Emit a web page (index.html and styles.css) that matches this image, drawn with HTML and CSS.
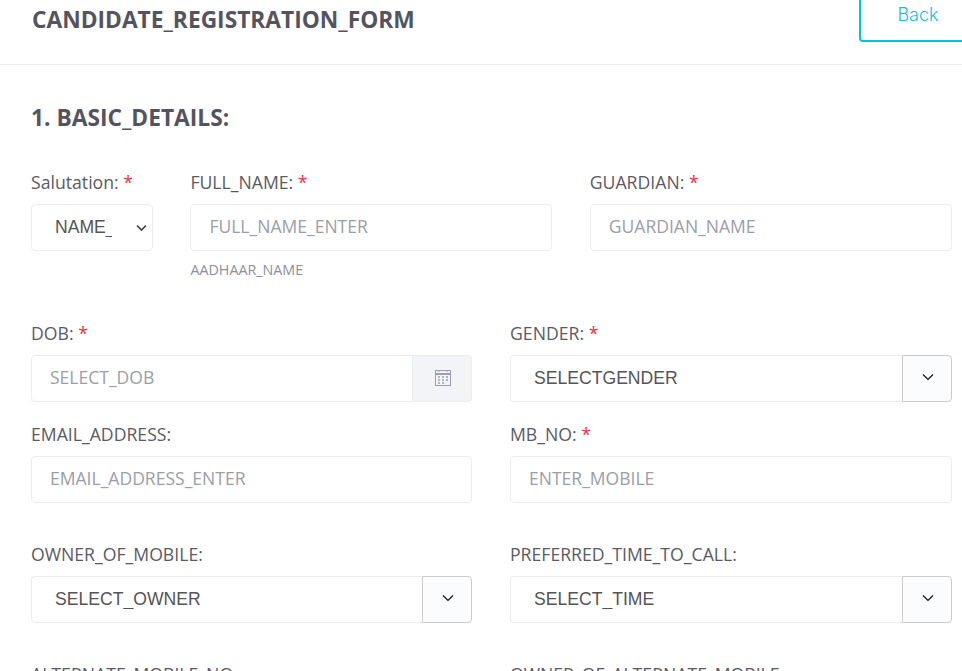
FILE: index.html
```html
<!DOCTYPE html>
<html lang="en">
<head>
    <meta charset="UTF-8">
    <meta name="viewport" content="width=device-width, initial-scale=1.0">
    <title>Candidate Registration Form</title>
    <link rel="stylesheet" href="styles.css">
</head>
<body>

    <!-- Page header -->
    <div class="header">
        <h1>CANDIDATE_REGISTRATION_FORM</h1>
        <button class="back-btn">Back</button>
    </div>

    <!-- Form -->
    <form class="form">
        <h2>1. BASIC_DETAILS:</h2>

        <div class="row row-names">
            <div class="field">
                <label for="salutation">Salutation: <span class="req">*</span></label>
                <div class="salutation-wrap">
                    <select id="salutation" class="salutation">
                        <option>NAME_</option>
                    </select>
                    <svg class="salutation-arrow" width="11" height="8" viewBox="0 0 11 8" fill="none"><path d="M1 1.5l4.5 4.5 4.5-4.5" stroke="#444" stroke-width="1.7"/></svg>
                </div>
            </div>
            <div class="field">
                <label for="fullName">FULL_NAME: <span class="req">*</span></label>
                <input type="text" id="fullName" placeholder="FULL_NAME_ENTER">
                <small>AADHAAR_NAME</small>
            </div>
            <div class="field">
                <label for="guardian">GUARDIAN: <span class="req">*</span></label>
                <input type="text" id="guardian" placeholder="GUARDIAN_NAME">
            </div>
        </div>

        <div class="row row-tight">
            <div class="field">
                <label for="dob">DOB: <span class="req">*</span></label>
                <div class="group">
                    <input type="text" id="dob" placeholder="SELECT_DOB">
                    <span class="addon-date">
                        <svg width="18" height="18" viewBox="0 0 18 18" fill="none">
                            <rect x="1.5" y="1.5" width="15" height="15" stroke="#9a9eb0"/>
                            <path d="M2 5h14" stroke="#9a9eb0" stroke-width="2"/>
                            <path d="M5 1v2M13 1v2" stroke="#9a9eb0"/>
                            <path d="M4 8h2M8 8h2M12 8h2M4 11h2M8 11h2M12 11h2M4 14h2M8 14h2" stroke="#9a9eb0" stroke-width="1.4"/>
                        </svg>
                    </span>
                </div>
            </div>
            <div class="field">
                <label for="gender">GENDER: <span class="req">*</span></label>
                <div class="group">
                    <select id="gender" class="plain-select"><option>SELECTGENDER</option></select>
                    <span class="addon-arrow">
                        <svg width="12" height="8" viewBox="0 0 12 8" fill="none"><path d="M1 1.5l5 5 5-5" stroke="#111" stroke-width="1.2"/></svg>
                    </span>
                </div>
            </div>
        </div>

        <div class="row">
            <div class="field">
                <label for="email">EMAIL_ADDRESS:</label>
                <input type="text" id="email" placeholder="EMAIL_ADDRESS_ENTER">
            </div>
            <div class="field">
                <label for="mobile">MB_NO: <span class="req">*</span></label>
                <input type="text" id="mobile" placeholder="ENTER_MOBILE">
            </div>
        </div>

        <div class="row">
            <div class="field">
                <label for="owner">OWNER_OF_MOBILE:</label>
                <div class="group">
                    <select id="owner" class="plain-select"><option>SELECT_OWNER</option></select>
                    <span class="addon-arrow">
                        <svg width="12" height="8" viewBox="0 0 12 8" fill="none"><path d="M1 1.5l5 5 5-5" stroke="#111" stroke-width="1.2"/></svg>
                    </span>
                </div>
            </div>
            <div class="field">
                <label for="callTime">PREFERRED_TIME_TO_CALL:</label>
                <div class="group">
                    <select id="callTime" class="plain-select"><option>SELECT_TIME</option></select>
                    <span class="addon-arrow">
                        <svg width="12" height="8" viewBox="0 0 12 8" fill="none"><path d="M1 1.5l5 5 5-5" stroke="#111" stroke-width="1.2"/></svg>
                    </span>
                </div>
            </div>
        </div>

        <div class="row">
            <div class="field">
                <label for="altMobile">ALTERNATE_MOBILE_NO:</label>
            </div>
            <div class="field">
                <label for="altOwner">OWNER_OF_ALTERNATE_MOBILE:</label>
            </div>
        </div>
    </form>

</body>
</html>
```

FILE: styles.css
```css
body {
    margin: 0;
    height: 671px;
    overflow: hidden;
    background: #fff;
    font-family: "Open Sans", sans-serif;
    color: #5a5a65;
}
.header {
    display: flex;
    justify-content: space-between;
    align-items: flex-end;
    height: 64px;
    padding-left: 32px;
    border-bottom: 1px solid #ebedf3;
}
h1 {
    margin: 0 0 29px;
    font-size: 22.75px;
    line-height: 30px;
    font-weight: 700;
    color: #54545f;
}
.back-btn {
    flex: none;
    width: 118px;
    height: 56px;
    margin: 0 -15px 22px 0;
    padding: 0;
    background: #fff;
    border: 2px solid #00c3dd;
    border-radius: 4px;
    font-family: Inter, sans-serif;
    font-size: 18px;
    font-weight: 300;
    color: #12bfd9;
}
.form {
    padding: 38px 10px 0 31px;
}
h2 {
    margin: 0 0 37px;
    font-size: 22.75px;
    line-height: 30px;
    font-weight: 700;
    color: #54545f;
}
.row {
    display: grid;
    grid-template-columns: 441px 442px;
    column-gap: 38px;
    margin-bottom: 39px;
}
.row-names {
    grid-template-columns: 122px 362px 362px;
    column-gap: 37.4px;
    margin-bottom: 42px;
}
.row-tight {
    margin-bottom: 20px;
}
.field {
    display: flex;
    flex-direction: column;
}
label {
    margin-bottom: 10px;
    font-size: 17.65px;
    line-height: 24px;
    color: #5a5a65;
}
.req {
    color: #f1313f;
}
input, select {
    box-sizing: border-box;
    width: 100%;
    height: 47px;
    background: #fff;
    border: 1px solid #ebedf3;
    border-radius: 4px;
    outline: none;
}
input {
    padding: 0 18px 3px;
    font-family: "Open Sans", sans-serif;
    font-size: 17.55px;
    color: #555;
}
input::placeholder {
    color: #9a9ea8;
    opacity: 1;
}
select {
    appearance: none;
    padding-bottom: 2px;
    font-family: "Liberation Sans", sans-serif;
    font-size: 17.6px;
    color: #555;
}
.salutation-wrap {
    position: relative;
}
.salutation {
    padding-left: 23px;
    padding-right: 40px;
}
/* native arrow replaced so it sits like the reference */
.salutation-arrow {
    position: absolute;
    right: 6px;
    top: 20px;
    pointer-events: none;
}
.plain-select {
    flex: 1;
    min-width: 0;
    padding-left: 23px;
}
small {
    margin-top: 10px;
    font-size: 14.3px;
    line-height: 18px;
    color: #8d8f99;
}
.group {
    display: flex;
    height: 47px;
}
.group input, .group select {
    flex: 1;
    min-width: 0;
    border-top-right-radius: 0;
    border-bottom-right-radius: 0;
    border-right: 0;
}
.addon-date, .addon-arrow {
    box-sizing: border-box;
    flex: none;
    display: flex;
    align-items: center;
    justify-content: center;
    border-radius: 0 4px 4px 0;
}
.addon-date {
    width: 60px;
    padding: 0 0 2px 1px;
    background: #f3f4f8;
    border: 1px solid #ebedf3;
}
.addon-arrow {
    width: 50px;
    padding: 0 0 4px 1px;
    background: #fbfcfd;
    border: 1px solid #c9cbcf;
}
```
